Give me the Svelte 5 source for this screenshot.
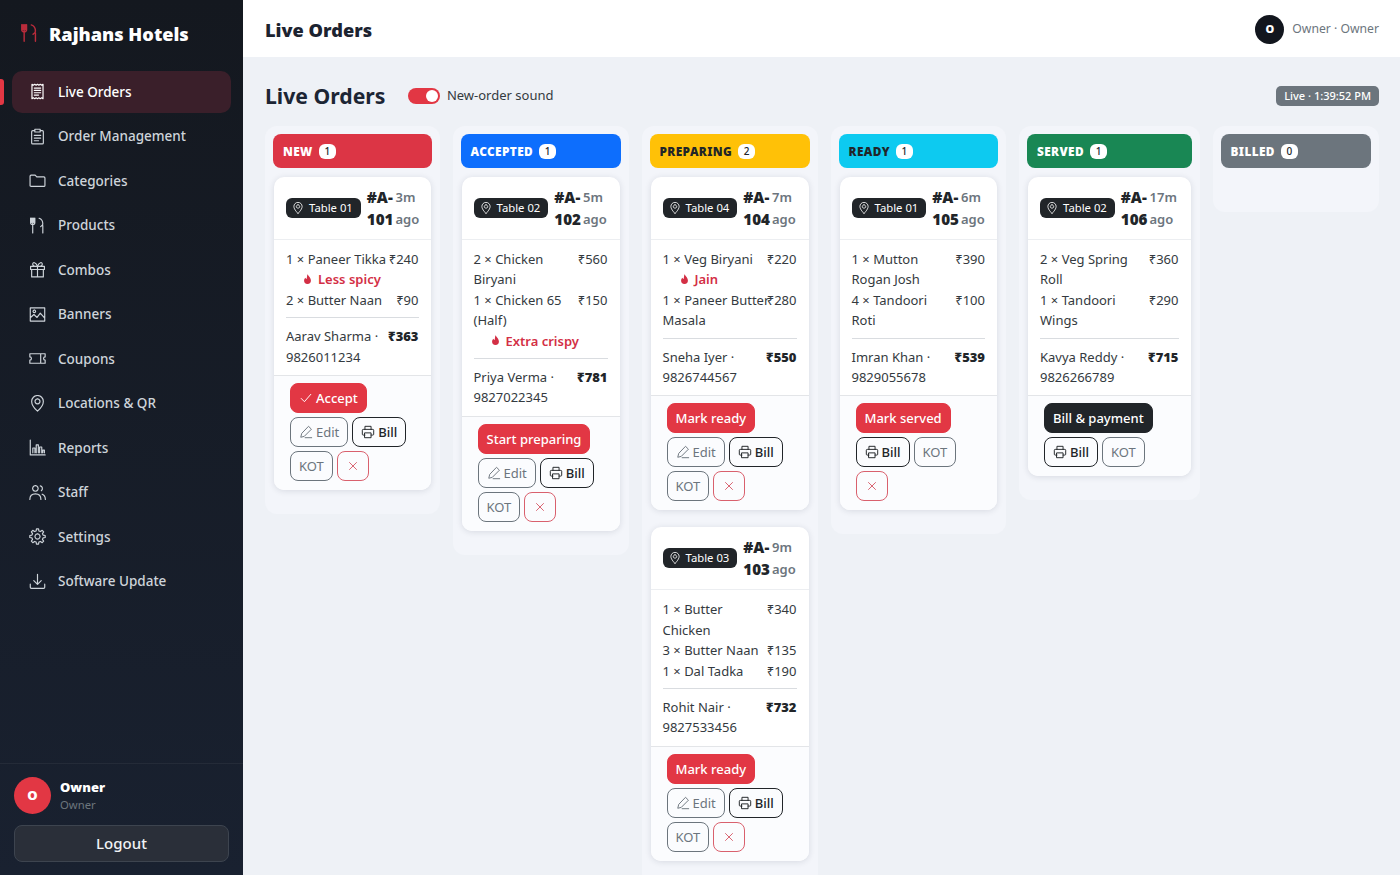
<script>
  function gear() {
    let d = '';
    const n = 8, cx = 8, cy = 8;
    for (let i = 0; i < n; i++) {
      const a = (i / n) * Math.PI * 2;
      const s = Math.PI / n;
      const pts = [[5.4, a - s * 0.62], [7.3, a - s * 0.34], [7.3, a + s * 0.34], [5.4, a + s * 0.62]];
      for (const [r, t] of pts) {
        d += (d ? 'L' : 'M') + (cx + r * Math.cos(t)).toFixed(2) + ' ' + (cy + r * Math.sin(t)).toFixed(2);
      }
    }
    return d + 'z M8 5.6a2.4 2.4 0 1 0 .01 0';
  }
  const icons = {
    receipt: 'M2.8 1.2l1.3.9 1.3-.9 1.3.9 1.3-.9 1.3.9 1.3-.9 1.3.9 1.3-.9v13.6l-1.3-.9-1.3.9-1.3-.9-1.3.9-1.3-.9-1.3.9-1.3-.9-1.3.9z M5 4.8h6 M5 7h6 M5 9.2h6 M5 11.4h4',
    clipboard: 'M5 2.5H3.5a1 1 0 0 0-1 1v10.5a1 1 0 0 0 1 1h9a1 1 0 0 0 1-1V3.5a1 1 0 0 0-1-1H11 M5.5 1.2h5v2.6h-5z M5 7h6 M5 9.5h6 M5 12h4',
    folder: 'M1 4a1 1 0 0 1 1-1h3.8l1.5 1.6H14a1 1 0 0 1 1 1v7a1 1 0 0 1-1 1H2a1 1 0 0 1-1-1z',
    fork: 'M3.5 1v14 M1.5 1v4.2a2 2 0 0 0 4 0V1 M2.5 1v4 M4.5 1v4 M9.5 1.2c2.6.8 3.5 2.8 3.5 5.3 0 1.4-1.5 2-2 2.5 M13 8v7',
    gift: 'M1.5 5h13v3h-13z M2.5 8v7h11V8 M8 5v10 M8 5C6.5 1 3.5.6 3.5 3c0 1.6 3 2 4.5 2 M8 5c1.5-4 4.5-4.4 4.5-2 0 1.6-3 2-4.5 2',
    image: 'M1.2 1.8h13.6v12.4H1.2z M1.2 11l3.4-3 3 2.8 3-4 4.2 4.6 M5 3.8a1.2 1.2 0 1 0 .01 0',
    ticket: 'M.8 3.5h14.4v3a1.5 1.5 0 0 0 0 3v3H.8v-3a1.5 1.5 0 0 0 0-3z M11 3.5v9',
    pin: 'M8 15.2s5.5-5 5.5-9.2a5.5 5.5 0 0 0-11 0c0 4.2 5.5 9.2 5.5 9.2z M8 3.7a2.3 2.3 0 1 0 .01 0',
    chart: 'M1.2 1v14h14 M3.6 13V8.5h2V13 M6.8 13V5.5h2V13 M10 13V7.5h2V13 M13 13v-2.5h1.5V13',
    people: 'M6 1.6a2.6 2.6 0 1 0 .01 0 M.8 14.5c0-3.2 2.2-5.2 5.2-5.2s5.2 2 5.2 5.2 M10.6 1.7a2.6 2.6 0 0 1 1 4.6 M12.4 9.6c1.8.6 3 2.4 3 4.9',
    gear: gear(),
    download: 'M1.2 10.5v3a1 1 0 0 0 1 1h11.6a1 1 0 0 0 1-1v-3 M8 1.2v9.3 M4.5 7.2L8 10.7l3.5-3.5',
    check: 'M2.5 8.5l3.7 3.7 7.3-8.4',
    pencil: 'M11.2 1.8l3 3L6 13l-4 1 1-4z M7 14.5h7.5',
    printer: 'M4.5 5V1.5h7V5 M4.5 11.5h-2a1 1 0 0 1-1-1V6a1 1 0 0 1 1-1h11a1 1 0 0 1 1 1v4.5a1 1 0 0 1-1 1h-2 M4.5 9h7v5.5h-7z',
    x: 'M4 4l8 8 M12 4l-8 8'
  };
  const nav = [
    ['Live Orders', 'receipt'], ['Order Management', 'clipboard'], ['Categories', 'folder'],
    ['Products', 'fork'], ['Combos', 'gift'], ['Banners', 'image'], ['Coupons', 'ticket'],
    ['Locations & QR', 'pin'], ['Reports', 'chart'], ['Staff', 'people'], ['Settings', 'gear'],
    ['Software Update', 'download']
  ];
  const it = (qty, name, price, note) => ({ qty, name, price, note });
  const columns = [
    { title: 'NEW', cls: 'new', orders: [
      { table: '01', id: '101', age: '3m', items: [it(1, 'Paneer Tikka', 240, 'Less spicy'), it(2, 'Butter Naan', 90)], who: 'Aarav Sharma', phone: '9826011234', total: 363, main: 'Accept', check: true, edit: true, cancel: true }
    ] },
    { title: 'ACCEPTED', cls: 'accepted', orders: [
      { table: '02', id: '102', age: '5m', items: [it(2, 'Chicken\nBiryani', 560), it(1, 'Chicken 65\n(Half)', 150, 'Extra crispy')], who: 'Priya Verma', phone: '9827022345', total: 781, main: 'Start preparing', edit: true, cancel: true }
    ] },
    { title: 'PREPARING', cls: 'preparing', orders: [
      { table: '04', id: '104', age: '7m', items: [it(1, 'Veg Biryani', 220, 'Jain'), it(1, 'Paneer Butter\nMasala', 280)], who: 'Sneha Iyer', phone: '9826744567', total: 550, main: 'Mark ready', edit: true, cancel: true },
      { table: '03', id: '103', age: '9m', items: [it(1, 'Butter\nChicken', 340), it(3, 'Butter Naan', 135), it(1, 'Dal Tadka', 190)], who: 'Rohit Nair', phone: '9827533456', total: 732, main: 'Mark ready', edit: true, cancel: true }
    ] },
    { title: 'READY', cls: 'ready', orders: [
      { table: '01', id: '105', age: '6m', items: [it(1, 'Mutton\nRogan Josh', 390), it(4, 'Tandoori\nRoti', 100)], who: 'Imran Khan', phone: '9829055678', total: 539, main: 'Mark served', cancel: true }
    ] },
    { title: 'SERVED', cls: 'served', orders: [
      { table: '02', id: '106', age: '17m', items: [it(2, 'Veg Spring\nRoll', 360), it(1, 'Tandoori\nWings', 290)], who: 'Kavya Reddy', phone: '9826266789', total: 715, main: 'Bill & payment', dark: true }
    ] },
    { title: 'BILLED', cls: 'billed', orders: [] }
  ];
</script>

{#snippet icon(name, size)}
  <svg class="ic" width={size} height={size} viewBox="0 0 16 16" fill="none" stroke="currentColor" stroke-width="1.1" stroke-linecap="round" stroke-linejoin="round" aria-hidden="true"><path d={icons[name]} /></svg>
{/snippet}

<div class="app">
  <aside class="side">
    <div class="brand">
      <svg class="ic brandic" width="19" height="24" viewBox="0 0 16 16" fill="none" stroke="#b92c3b" stroke-width="1.2" stroke-linecap="round" aria-hidden="true"><path d={icons.fork} /></svg>
      <span>Rajhans Hotels</span>
    </div>
    <nav class="nav">
      {#each nav as [label, ic], i}
        <div class="navitem" class:active={i === 0}>
          {@render icon(ic, 17)}
          <span>{label}</span>
        </div>
      {/each}
    </nav>
    <div class="sidefoot">
      <div class="user">
        <div class="avatar">O</div>
        <div class="uinfo"><strong>Owner</strong><small>Owner</small></div>
      </div>
      <button class="logout">Logout</button>
    </div>
  </aside>

  <main class="main">
    <header class="top">
      <h2>Live Orders</h2>
      <div class="topuser"><span class="tavatar">O</span><span>Owner · Owner</span></div>
    </header>
    <section class="content">
      <div class="pagehead">
        <h1>Live Orders</h1>
        <div class="sound"><span class="switch"></span><span>New-order sound</span></div>
        <span class="live">Live · 1:39:52 PM</span>
      </div>
      <div class="board">
        {#each columns as col}
          <div class="col">
            <div class="colhead {col.cls}"><span>{col.title}</span><b class="count">{col.orders.length}</b></div>
            <div class="list">
              {#each col.orders as o}
                <article class="card">
                  <div class="chead">
                    <span class="tbl">{@render icon('pin', 12)}Table {o.table}</span>
                    <div class="ident"><strong>#A-{o.id}</strong><span>{o.age} ago</span></div>
                  </div>
                  <div class="cbody">
                    <div class="items">
                      {#each o.items as i}
                        <div class="item"><span class="iname">{i.qty} × {i.name}</span><span>₹{i.price}</span></div>
                        {#if i.note}
                          <div class="note"><svg width="9" height="11" viewBox="0 0 10 12" aria-hidden="true"><path fill="currentColor" d="M5 0c.4 2 3.8 3.8 3.8 7.2A3.8 3.8 0 0 1 1.2 7.2C1.2 5.6 2 4.6 3 4c0 1 .4 1.4.9 1.4C4.6 4 4.4 1.6 5 0z" /></svg><span>{i.note}</span></div>
                        {/if}
                      {/each}
                    </div>
                    <div class="cust"><span>{o.who} · {o.phone}</span><strong>₹{o.total}</strong></div>
                  </div>
                  <div class="cfoot">
                    <button class="btn main-btn" class:dark={o.dark}>{#if o.check}{@render icon('check', 14)}{/if}{o.main}</button>
                    {#if o.edit}<button class="btn ghost">{@render icon('pencil', 14)}Edit</button>{/if}
                    <button class="btn strong">{@render icon('printer', 14)}Bill</button>
                    <button class="btn ghost">KOT</button>
                    {#if o.cancel}<button class="btn cancel" aria-label="Cancel">{@render icon('x', 14)}</button>{/if}
                  </div>
                </article>
              {/each}
            </div>
          </div>
        {/each}
      </div>
    </section>
  </main>
</div>

<style>
  :global(body) { margin: 0; overflow: hidden; background: #eef1f6; }
  .app { display: flex; height: 875px; overflow: hidden; font-family: "Noto Sans", "Open Sans", sans-serif; font-size: 13px; line-height: 20.4px; color: #212529; }
  .ic { flex: none; display: block; }

  .side { width: 243px; flex: none; display: flex; flex-direction: column; background: linear-gradient(180deg, #14181f 0%, #192130 100%); color: #fff; }
  .brand { height: 68px; box-sizing: border-box; display: flex; align-items: center; gap: 10px; padding-left: 20px; font-size: 18.2px; font-weight: 900; }
  .brandic { margin-top: -3px; }
  .nav { flex: 1; padding-top: 2.5px; display: flex; flex-direction: column; gap: 2px; }
  .navitem { position: relative; height: 42.5px; margin: 0 12px; padding-left: 17px; display: flex; align-items: center; gap: 12px; border-radius: 10px; color: #ced4da; font-size: 13.5px; font-weight: 500; }
  .navitem.active { background: #3a1f2a; color: #fff; }
  .navitem.active::before { content: ""; position: absolute; left: -12px; top: 8px; width: 4px; height: 26px; background: #e23744; border-radius: 0 3px 3px 0; }
  .sidefoot { border-top: 1px solid #242b38; padding: 13px 14px 13px; display: flex; flex-direction: column; gap: 11px; }
  .user { display: flex; align-items: center; gap: 9px; }
  .avatar { width: 37px; height: 37px; border-radius: 50%; background: #e23744; display: flex; align-items: center; justify-content: center; font-weight: 900; font-size: 13px; }
  .uinfo { display: flex; flex-direction: column; line-height: 17px; }
  .uinfo strong { font-size: 13px; font-weight: 900; }
  .uinfo small { font-size: 11.3px; color: #6c757d; }
  .logout { height: 37px; width: 100%; border: 1px solid #3d444f; border-radius: 8px; background: #2a2f39; color: #f1f3f5; font: 500 15px "Noto Sans", sans-serif; padding-bottom: 3px; }

  .main { flex: 1; min-width: 0; display: flex; flex-direction: column; }
  .top { height: 57px; box-sizing: border-box; flex: none; background: #fff; display: flex; align-items: center; justify-content: space-between; padding: 2px 21px 0 22px; }
  h2 { margin: 1px 0 0; font-size: 18.2px; font-weight: 900; color: #1c2330; }
  .topuser { display: flex; align-items: center; gap: 8px; color: #6c757d; font-size: 12.2px; }
  .tavatar { width: 29px; height: 29px; border-radius: 50%; background: #12161e; color: #fff; display: flex; align-items: center; justify-content: center; font-size: 11px; font-weight: 900; }

  .content { flex: 1; padding: 0 21px 0 22px; min-height: 0; }
  .pagehead { height: 69px; padding-top: 8px; box-sizing: border-box; display: flex; align-items: center; }
  h1 { margin: 0 22.5px 0 0; font-size: 21.2px; font-weight: 700; color: #1c2534; line-height: 1.2; }
  .sound { display: flex; align-items: center; gap: 7px; font-size: 13px; color: #343a40; }
  .switch { position: relative; width: 32px; height: 16px; border-radius: 8px; background: #e23744; }
  .switch::after { content: ""; position: absolute; right: 2px; top: 2px; width: 12px; height: 12px; border-radius: 50%; background: #fff; }
  .live { margin-left: auto; background: #6c757d; color: #fff; font-size: 11px; font-weight: 500; border-radius: 5px; padding: 0 8px; line-height: 20px; }

  .board { display: grid; grid-template-columns: 174.5px 176px 176px 175.5px 180.5px 166.5px; gap: 13px; align-items: start; }
  .col { background: #f3f5fa; border-radius: 12px; padding: 8px; box-sizing: border-box; }
  .colhead { height: 34px; border-radius: 8px; display: flex; align-items: center; gap: 6px; padding: 0 10px; font-size: 11.8px; font-weight: 900; letter-spacing: .4px; color: #fff; }
  .count { background: #fff; color: #212529; border-radius: 6px; width: 17px; height: 15px; display: flex; align-items: center; justify-content: center; font-size: 10px; font-weight: 500; letter-spacing: 0; }
  .new { background: #dc3545; }
  .accepted { background: #0d6efd; }
  .preparing { background: #ffc107; color: #212529; }
  .ready { background: #0dcaf0; color: #212529; }
  .served { background: #198754; }
  .billed { background: #6c757d; }
  .list { display: flex; flex-direction: column; gap: 17px; padding-top: 9px; padding-bottom: 16px; min-height: 11px; margin: 0 1px; }
  .card { background: #fff; border-radius: 10px; box-shadow: 0 1px 6px rgba(30, 40, 60, .13); overflow: hidden; }
  .chead { display: flex; align-items: center; justify-content: space-between; gap: 6px; padding: 9px 4px 9px 12px; border-bottom: 1px solid #eceef1; }
  .tbl { flex: none; display: flex; align-items: center; gap: 5px; background: #212529; color: #fff; height: 20px; padding: 0 8px 0 6px; border-radius: 6px; font-size: 11.3px; }
  .ident { display: flex; gap: 2px; align-items: center; line-height: 22px; margin-right: 11px; }
  .ident strong { width: min-content; font-size: 15.2px; font-weight: 900; color: #212529; }
  .ident span { width: min-content; font-weight: 600; color: #6c757d; font-size: 13px; }
  .cbody { padding: 9px 12px 8px; }
  .items { padding-bottom: 7px; border-bottom: 1px solid #d9dce0; margin-bottom: 8px; }
  .item { display: flex; justify-content: space-between; color: #343a40; }
  .iname { white-space: pre; min-width: 0; }
  .note { display: flex; align-items: center; gap: 6px; margin-left: 17px; color: #d32f45; font-weight: 600; }
  .cust { display: flex; justify-content: space-between; color: #343a40; }
  .cust strong { flex: none; font-weight: 900; color: #212529; }
  .cfoot { display: flex; flex-wrap: wrap; gap: 4px; padding: 7px 16px 9px; background: #fbfcfe; border-top: 1px solid #e3e5e8; }
  .btn { height: 30px; box-sizing: border-box; display: inline-flex; align-items: center; gap: 3px; padding: 0 8px; border-radius: 8px; background: transparent; border: 1px solid #6c757d; font: 400 13px "Noto Sans", sans-serif; color: #6c757d; white-space: nowrap; }
  .main-btn { background: #e23744; border-color: #e23744; color: #fff; font-weight: 500; }
  .main-btn.dark { background: #212529; border-color: #212529; }
  .strong { border-color: #212529; color: #212529; font-weight: 500; }
  .cancel { border-color: #d9606d; color: #d9606d; width: 32px; justify-content: center; padding: 0; }
</style>
